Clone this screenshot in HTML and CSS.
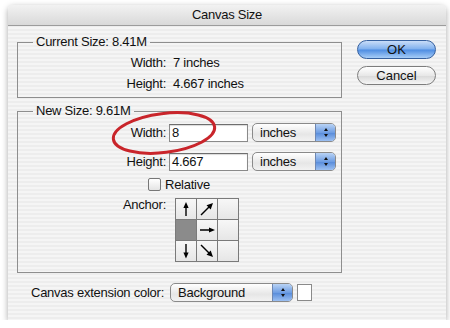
FILE: index.html
```html
<!DOCTYPE html>
<html>
<head>
    <meta charset="UTF-8">
    <title>Canvas Size</title>
    <link rel="stylesheet" href="styles.css">
</head>
<body>
    <div class="window">
        <div class="titlebar">Canvas Size</div>
        <div class="content">
            <div class="main">
                <fieldset class="group current">
                    <legend>Current Size: 8.41M</legend>
                    <div class="row info">
                        <span class="label">Width:</span>
                        <span class="value">7 inches</span>
                    </div>
                    <div class="row info">
                        <span class="label">Height:</span>
                        <span class="value">4.667 inches</span>
                    </div>
                </fieldset>

                <fieldset class="group newsize">
                    <legend>New Size: 9.61M</legend>
                    <div class="row field first">
                        <span class="label">Width:</span>
                        <div class="input">8</div>
                        <div class="select unit">
                            <span>inches</span>
                            <span class="arrows"><i class="up"></i><i class="down"></i></span>
                        </div>
                    </div>
                    <div class="row field">
                        <span class="label">Height:</span>
                        <div class="input">4.667</div>
                        <div class="select unit">
                            <span>inches</span>
                            <span class="arrows"><i class="up"></i><i class="down"></i></span>
                        </div>
                    </div>
                    <div class="relative">
                        <span class="checkbox"></span>
                        <span>Relative</span>
                    </div>
                    <div class="row anchor-row">
                        <span class="label">Anchor:</span>
                        <div class="anchor">
                            <div class="cell">
                                <svg width="20" height="20" viewBox="0 0 20 20"><path d="M10 17V6" stroke="#000" stroke-width="1.4"/><path d="M10 3l-2.6 6h5.2z" fill="#000"/></svg>
                            </div>
                            <div class="cell">
                                <svg width="20" height="20" viewBox="0 0 20 20"><path d="M4 16L13.5 6.5" stroke="#000" stroke-width="1.4"/><path d="M16 4l-6.5 2.3 4.2 4.2z" fill="#000"/></svg>
                            </div>
                            <div class="cell"></div>
                            <div class="cell selected"></div>
                            <div class="cell">
                                <svg width="20" height="20" viewBox="0 0 20 20"><path d="M3 10h11" stroke="#000" stroke-width="1.4"/><path d="M18 10l-6-2.6v5.2z" fill="#000"/></svg>
                            </div>
                            <div class="cell"></div>
                            <div class="cell">
                                <svg width="20" height="20" viewBox="0 0 20 20"><path d="M10 3v11" stroke="#000" stroke-width="1.4"/><path d="M10 17.5l-2.6-6h5.2z" fill="#000"/></svg>
                            </div>
                            <div class="cell">
                                <svg width="20" height="20" viewBox="0 0 20 20"><path d="M4 4L13.5 13.5" stroke="#000" stroke-width="1.4"/><path d="M16 16l-2.3-6.5-4.2 4.2z" fill="#000"/></svg>
                            </div>
                            <div class="cell"></div>
                        </div>
                    </div>

                    <!-- red circle drawn over the width field -->
                    <svg class="mark" width="120" height="50" viewBox="0 0 120 50">
                        <ellipse cx="60" cy="25" rx="51" ry="19.5" transform="rotate(-7 60 25)" fill="none" stroke="#c9252b" stroke-width="3"/>
                    </svg>
                </fieldset>

                <div class="extension">
                    <span>Canvas extension color:</span>
                    <div class="select color">
                        <span>Background</span>
                        <span class="arrows"><i class="up"></i><i class="down"></i></span>
                    </div>
                    <span class="swatch"></span>
                </div>
            </div>

            <div class="buttons">
                <button class="btn ok">OK</button>
                <button class="btn">Cancel</button>
            </div>
        </div>
    </div>
</body>
</html>
```

FILE: styles.css
```css
body {
    margin: 0;
    background-color: white;
    font-family: "Liberation Sans", Arial, sans-serif;
    font-size: 13px;
    letter-spacing: -0.25px;
    color: #111;
}

.window {
    width: 438px;
    height: 315px;
    margin: 5px 0 0 8px;
    border-radius: 5px 5px 0 0;
    background: repeating-linear-gradient(#ededed 0 2px, #f5f5f5 2px 4px);
    box-shadow: 0 2px 6px rgba(0, 0, 0, 0.35);
    overflow: hidden;
}

.titlebar {
    height: 20px;
    line-height: 20px;
    text-align: center;
    background: linear-gradient(#f2f2f2, #d9d9d9);
    border-bottom: 1px solid #9c9c9c;
}

.content {
    display: flex;
    padding: 8px 0 0 9px;
}

.main {
    width: 325px;
}

.group {
    position: relative;
    margin: 0;
    padding: 0;
    border: 1px solid #8e8e8e;
}

.group legend {
    margin-left: 15px;
    padding: 0 3px;
    line-height: 16px;
}

.current {
    padding: 2px 0 3px;
}

.row {
    display: flex;
    align-items: center;
}

.label {
    width: 148px;
    text-align: right;
}

.info {
    height: 21px;
}

.info .value {
    margin-left: 7px;
}

.newsize {
    margin-top: 5px;
    padding: 4px 0 10px;
}

.field .label {
    margin-right: 3px;
}

.field + .field {
    margin-top: 10px;
}

.input {
    width: 75px;
    height: 16px;
    line-height: 16px;
    padding-left: 2px;
    box-sizing: content-box;
    background-color: white;
    border: 1px solid #8a8a8a;
    border-top-color: #6e6e6e;
    box-shadow: inset 0 1px 1px rgba(0, 0, 0, 0.15);
}

.select {
    display: flex;
    justify-content: space-between;
    height: 17px;
    line-height: 17px;
    border: 1px solid #8a8a8a;
    border-radius: 5px;
    background: linear-gradient(#ffffff, #e6e6e6 60%, #f2f2f2);
    overflow: hidden;
}

.select span:first-child {
    padding-left: 7px;
}

.unit {
    width: 82px;
    margin-left: 4px;
}

.arrows {
    display: flex;
    flex-direction: column;
    justify-content: center;
    align-items: center;
    gap: 3px;
    width: 19px;
    background: linear-gradient(#b9d3f5, #6f9ee3 50%, #5b8edb 55%, #9cc0f2);
    border-left: 1px solid #6d87b3;
}

.arrows i {
    width: 0;
    height: 0;
    border-left: 2.5px solid transparent;
    border-right: 2.5px solid transparent;
}

.arrows .up {
    border-bottom: 3px solid #111;
}

.arrows .down {
    border-top: 3px solid #111;
}

.relative {
    display: flex;
    align-items: center;
    gap: 4px;
    margin: 6px 0 0 130px;
    height: 14px;
}

.checkbox {
    width: 11px;
    height: 11px;
    border: 1px solid #777;
    border-radius: 2px;
    background: linear-gradient(#ffffff, #e4e4e4);
}

.anchor-row {
    align-items: flex-start;
    margin-top: 7px;
}

.anchor-row .label {
    margin-right: 9px;
    margin-top: -1px;
}

.anchor {
    display: grid;
    grid-template-columns: repeat(3, 20px);
    grid-template-rows: repeat(3, 20px);
    gap: 1px;
    padding: 1px;
    background-color: #7a7a7a;
}

.cell {
    display: flex;
    align-items: center;
    justify-content: center;
    background: linear-gradient(#f7f7f7, #e6e6e6);
}

.cell.selected {
    background: #8b8b8b;
}

.mark {
    position: absolute;
    left: 86px;
    top: -11px;
}

.extension {
    display: flex;
    align-items: center;
    margin-top: 10px;
    padding-left: 14px;
}

.color {
    width: 121px;
    margin-left: 6px;
}

.swatch {
    width: 13px;
    height: 15px;
    margin-left: 4px;
    background-color: white;
    border: 1px solid #8a8a8a;
}

.buttons {
    display: flex;
    flex-direction: column;
    gap: 7px;
    margin: 6px 0 0 15px;
}

.btn {
    width: 79px;
    height: 19px;
    padding: 0;
    font-family: inherit;
    font-size: 13px;
    color: #111;
    border: 1px solid #7d7d7d;
    border-radius: 10px;
    background: linear-gradient(#ffffff, #e8e8e8 50%, #d9d9d9 52%, #f6f6f6);
}

.btn.ok {
    border-color: #35609f;
    background: linear-gradient(#c9ddf8, #7fb0ee 48%, #4d8ce2 52%, #a7cdf7);
}
```
